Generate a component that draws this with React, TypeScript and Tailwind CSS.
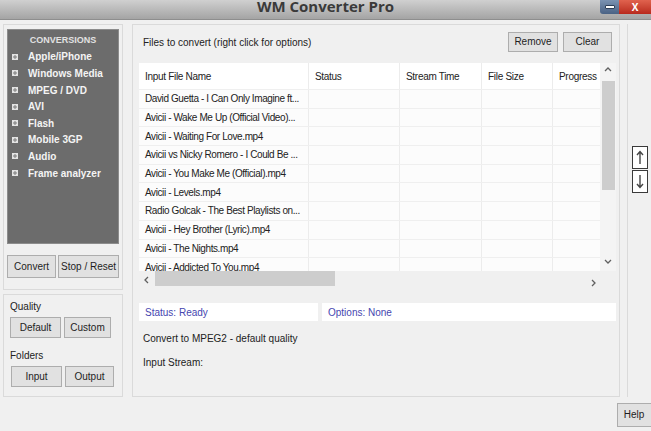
import React from 'react';

const LIST_ITEMS = ['Apple/iPhone', 'Windows Media', 'MPEG / DVD', 'AVI', 'Flash', 'Mobile 3GP', 'Audio', 'Frame analyzer'];

const FILES = [
  'David Guetta - I Can Only Imagine ft...',
  'Avicii - Wake Me Up (Official Video)...',
  'Avicii - Waiting For Love.mp4',
  'Avicii vs Nicky Romero - I Could Be ...',
  'Avicii - You Make Me (Official).mp4',
  'Avicii - Levels.mp4',
  'Radio Golcak - The Best Playlists on...',
  'Avicii - Hey Brother (Lyric).mp4',
  'Avicii - The Nights.mp4',
  'Avicii - Addicted To You.mp4',
];

function Btn({ label, className }: { label: string; className?: string }) {
  return (
    <button className={`border border-[#adadad] bg-[#e1e1e1] text-[10px] leading-none text-[#1e1e1e] ${className ?? ''}`}>
      {label}
    </button>
  );
}

function Chevron({ dir }: { dir: 'up' | 'down' | 'left' | 'right' }) {
  const d = {
    up: 'M1 5 L4 2 L7 5',
    down: 'M1 2 L4 5 L7 2',
    left: 'M5 1 L2 4 L5 7',
    right: 'M2 1 L5 4 L2 7',
  }[dir];
  return (
    <svg width="8" height="8" viewBox="0 0 8 8">
      <path d={d} fill="none" stroke="#606060" strokeWidth="1.3" />
    </svg>
  );
}

function PlusBox() {
  return (
    <svg width="6" height="6" viewBox="0 0 6 6" className="shrink-0">
      <rect x="0" y="0" width="6" height="6" fill="#e4e4e4" />
      <path d="M3 1 V5 M1 3 H5" stroke="#7a7a7a" strokeWidth="1" />
    </svg>
  );
}

function ArrowBtn({ up }: { up?: boolean }) {
  return (
    <div className="flex h-[23px] w-[16px] items-center justify-center border border-[#3a3a3a] bg-white">
      <svg width="8" height="15" viewBox="0 0 8 15">
        {up ? (
          <path d="M4 2 V14 M1 5 L4 1.5 L7 5" fill="none" stroke="#444" strokeWidth="1.4" />
        ) : (
          <path d="M4 1 V13 M1 10 L4 13.5 L7 10" fill="none" stroke="#444" strokeWidth="1.4" />
        )}
      </svg>
    </div>
  );
}

const COLS = ['w-[170px]', 'w-[91px]', 'w-[82px]', 'w-[71px]', 'w-[47px]'];
const HEADERS = ['Input File Name', 'Status', 'Stream Time', 'File Size', 'Progress'];

export default function App() {
  return (
    <div className="flex h-[431px] w-[651px] flex-col overflow-hidden bg-[#f0f0f0] font-['Liberation_Sans',Arial,sans-serif] text-[#222]">
      {/* Title bar */}
      <div className="flex h-[20px] shrink-0 border-b border-[#8e8e8e] bg-gradient-to-b from-[#d0d0d0] to-[#a4a4a4]">
        <div className="w-[51px]" />
        <div className="flex flex-1 justify-center overflow-hidden">
          <span className="mt-[-2px] font-['Open_Sans',sans-serif] text-[15px] font-bold leading-[16px] text-[#3a3a3a]">WM Converter Pro</span>
        </div>
        <div className="flex h-[14px] w-[51px]">
          <div className="flex w-[19px] items-center justify-center rounded-bl-[3px] bg-gradient-to-b from-[#7a92b2] to-[#4a6284]">
            <div className="h-[4px] w-[10px] rounded-[1px] border border-[#2c3e58] bg-white" />
          </div>
          <div className="flex flex-1 items-center justify-center bg-gradient-to-b from-[#e0624e] to-[#b8281c]">
            <span className="font-['Open_Sans',sans-serif] text-[10px] font-bold leading-none text-white">X</span>
          </div>
        </div>
      </div>

      {/* Body */}
      <div className="flex h-[377px] shrink-0 pt-[4px]">
        {/* Left column */}
        <div className="ml-[3px] flex w-[120px] flex-col">
          <div className="flex h-[266px] flex-col border border-[#dadada] px-[3px] pt-[4px]">
            <div className="h-[215px] border border-[#8c8c8c] bg-[#6c6c6c] pt-[2px]">
              <div className="text-center text-[9px] font-bold leading-[16.6px] text-[#e2e2e2]">CONVERSIONS</div>
              {LIST_ITEMS.map((item) => (
                <div key={item} className="flex h-[16.6px] items-center pl-[4px]">
                  <PlusBox />
                  <span className="ml-[10px] text-[10px] font-bold text-[#f4f4f4]">{item}</span>
                </div>
              ))}
            </div>
            <div className="mt-[11px] flex h-[23px] gap-[2px]">
              <Btn label="Convert" className="w-[50px]" />
              <Btn label="Stop / Reset" className="w-[62px]" />
            </div>
          </div>
          <div className="mt-[4px] flex h-[103px] flex-col border border-[#dadada] px-[6px]">
            <div className="mt-[6px] text-[10px] leading-[12px]">Quality</div>
            <div className="mt-[4px] flex h-[21px] gap-[3px]">
              <Btn label="Default" className="w-[51px]" />
              <Btn label="Custom" className="w-[47px]" />
            </div>
            <div className="mt-[12px] text-[10px] leading-[12px]">Folders</div>
            <div className="mt-[4px] flex h-[21px] gap-[3px] pl-[1px]">
              <Btn label="Input" className="w-[51px]" />
              <Btn label="Output" className="w-[49px]" />
            </div>
          </div>
        </div>

        {/* Right group */}
        <div className="ml-[9px] flex h-[373px] w-[488px] flex-col border border-[#dadada] pl-[6px] pr-[3px]">
          <div className="mt-[7px] flex h-[20px] items-center">
            <span className="flex-1 pl-[4px] text-[10px]">Files to convert (right click for options)</span>
            <Btn label="Remove" className="h-full w-[50px]" />
            <Btn label="Clear" className="ml-[5px] mr-[4px] h-full w-[49px]" />
          </div>

          {/* Table */}
          <div className="mt-[11px] flex w-[477px] flex-col">
            <div className="flex h-[208px]">
              <div className="w-[461px] overflow-hidden bg-white">
                <div className="flex h-[26px] items-center">
                  {HEADERS.map((h, i) => (
                    <div key={h} className={`${COLS[i]} flex h-full shrink-0 items-center overflow-hidden whitespace-nowrap border-r border-[#ececec] pl-[6px] text-[10px] tracking-[-0.3px] ${i === 4 ? 'border-r-0 pl-[4px]' : ''}`}>
                      {h}
                    </div>
                  ))}
                </div>
                {FILES.map((f) => (
                  <div key={f} className="flex h-[18.7px] border-t border-[#efefef] bg-[#fcfcfc]">
                    {COLS.map((c, i) => (
                      <div key={c} className={`${c} flex shrink-0 items-center overflow-hidden whitespace-nowrap border-r border-[#ececec] pl-[6px] text-[10px] tracking-[-0.4px] ${i === 4 ? 'border-r-0' : ''}`}>
                        {i === 0 ? f : ''}
                      </div>
                    ))}
                  </div>
                ))}
              </div>
              <div className="flex w-[16px] flex-col items-center bg-[#f4f4f4] pt-[3px] pb-[5px]">
                <Chevron dir="up" />
                <div className="mt-[7px] h-[109px] w-[13px] bg-[#cdcdcd]" />
                <div className="flex-1" />
                <Chevron dir="down" />
              </div>
            </div>
            <div className="flex h-[17px] bg-[#f0f0f0]">
              <div className="flex w-[461px] items-center pl-[4px] pr-[2px]">
                <Chevron dir="left" />
                <div className="ml-[4px] h-[15px] w-[180px] self-start bg-[#cdcdcd]" />
                <div className="flex-1" />
                <div className="mt-[6px]">
                  <Chevron dir="right" />
                </div>
              </div>
              <div className="w-[16px]" />
            </div>
          </div>

          {/* Status */}
          <div className="mt-[15px] flex h-[18px] w-[477px] gap-[4px]">
            <div className="flex w-[179px] items-center bg-white pl-[6px] text-[10px] text-[#4646b0]">Status: Ready</div>
            <div className="flex flex-1 items-center bg-white pl-[6px] text-[10px] text-[#4646b0]">Options: None</div>
          </div>
          <div className="mt-[11px] pl-[4px] text-[10px] leading-[14px]">Convert to MPEG2 - default quality</div>
          <div className="mt-[10px] pl-[4px] text-[10px] leading-[14px]">Input Stream:</div>
        </div>

        {/* Right strip */}
        <div className="ml-[7px] flex h-[373px] flex-1 flex-col border-l border-[#dadada] pl-[4px]">
          <div className="mt-[122px] flex flex-col gap-[1px]">
            <ArrowBtn up />
            <ArrowBtn />
          </div>
        </div>
      </div>

      {/* Footer */}
      <div className="flex justify-end pt-[6px]">
        <Btn label="Help" className="mr-[-6px] h-[24px] w-[40px] pr-[6px]" />
      </div>
    </div>
  );
}
